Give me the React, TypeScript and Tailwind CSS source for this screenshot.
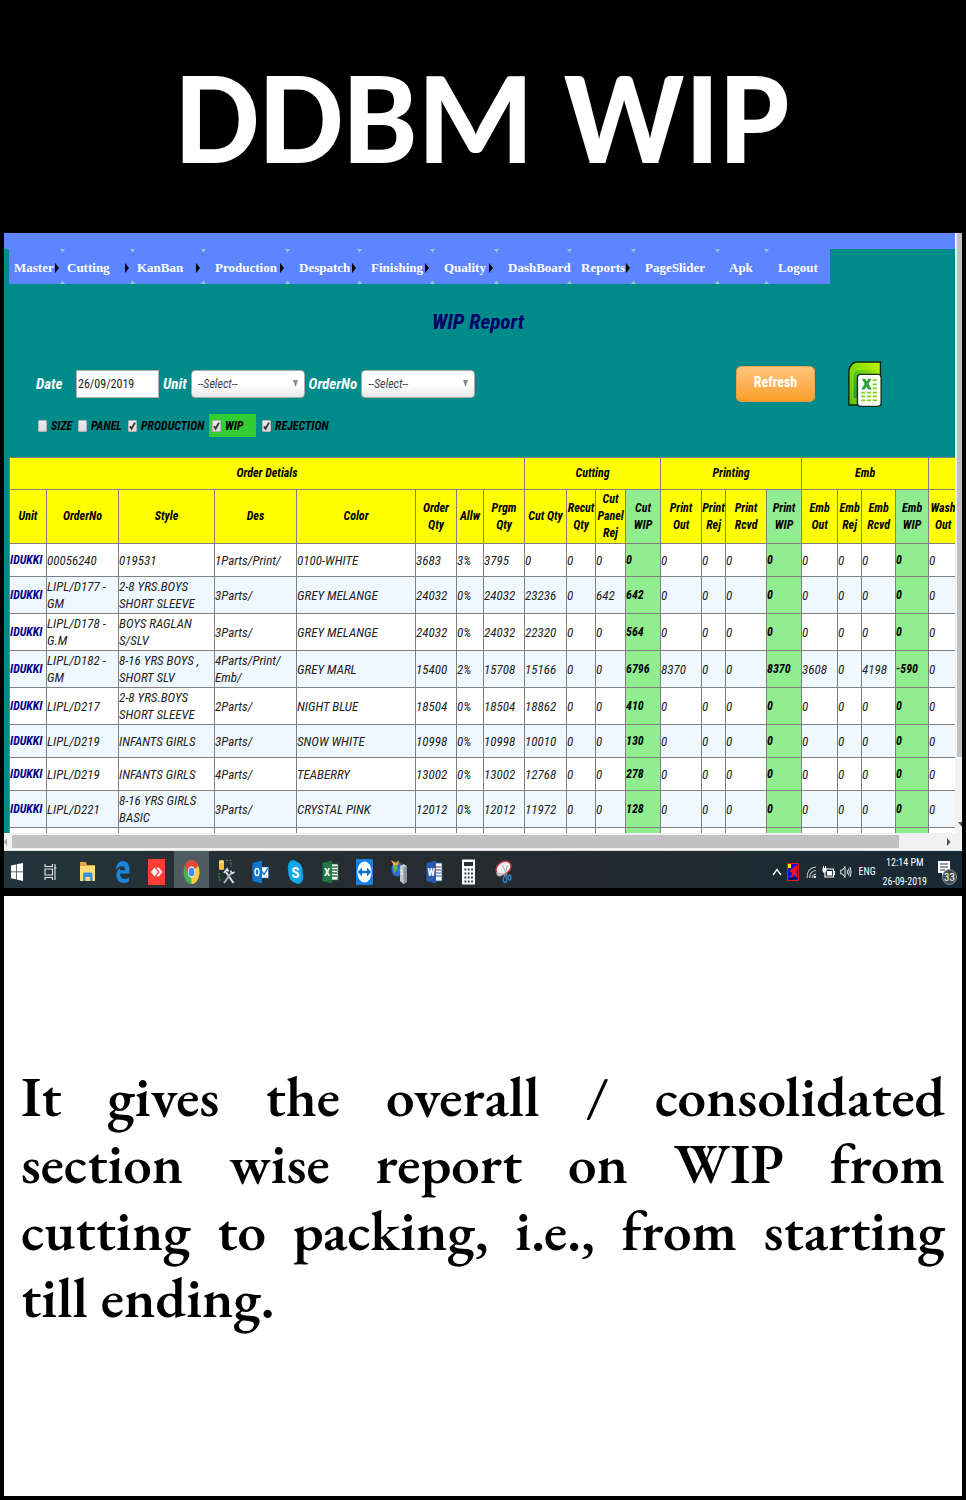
import type { ReactNode } from 'react';

type MenuEntry = { label: string; arrow?: boolean; box: string };

const menu: MenuEntry[] = [
  { label: 'Master', arrow: true, box: 'w-[53px] pl-[5px]' },
  { label: 'Cutting', arrow: true, box: 'w-[70px] pl-[5px]' },
  { label: 'KanBan', arrow: true, box: 'w-[71px] pl-[5px]' },
  { label: 'Production', arrow: true, box: 'w-[84px] pl-[12px]' },
  { label: 'Despatch', arrow: true, box: 'w-[72px] pl-[12px]' },
  { label: 'Finishing', arrow: true, box: 'w-[73px] pl-[12px]' },
  { label: 'Quality', arrow: true, box: 'w-[64px] pl-[12px]' },
  { label: 'DashBoard', box: 'w-[73px] pl-[12px]' },
  { label: 'Reports', arrow: true, box: 'w-[64px] pl-[12px]' },
  { label: 'PageSlider', box: 'w-[84px] pl-[12px]' },
  { label: 'Apk', box: 'w-[49px] pl-[12px]' },
  { label: 'Logout', box: 'w-[64px] pl-[12px]' },
];

const columnWidths = [
  'w-[37px]', 'w-[72px]', 'w-[96px]', 'w-[82px]', 'w-[119px]', 'w-[41px]', 'w-[27px]',
  'w-[41px]', 'w-[42px]', 'w-[29px]', 'w-[30px]', 'w-[35px]', 'w-[41px]', 'w-[24px]',
  'w-[41px]', 'w-[35px]', 'w-[36px]', 'w-[24px]', 'w-[34px]', 'w-[33px]', 'w-[29px]',
];

const columns = [
  'Unit', 'OrderNo', 'Style', 'Des', 'Color', 'Order Qty', 'Allw', 'Prgm Qty', 'Cut Qty',
  'Recut Qty', 'Cut Panel Rej', 'Cut WIP', 'Print Out', 'Print Rej', 'Print Rcvd',
  'Print WIP', 'Emb Out', 'Emb Rej', 'Emb Rcvd', 'Emb WIP', 'Wash Out',
];

const groups = [
  { label: 'Order Detials', span: 8 },
  { label: 'Cutting', span: 4 },
  { label: 'Printing', span: 4 },
  { label: 'Emb', span: 4 },
  { label: '', span: 1 },
];

const z = '0';
const rows: { tall: boolean; cells: string[] }[] = [
  { tall: false, cells: ['IDUKKI', '00056240', '019531', '1Parts/Print/', '0100-WHITE', '3683', '3%', '3795', z, z, z, z, z, z, z, z, z, z, z, z, z] },
  { tall: true, cells: ['IDUKKI', 'LIPL/D177 -\nGM', '2-8 YRS.BOYS\nSHORT SLEEVE', '3Parts/', 'GREY MELANGE', '24032', '0%', '24032', '23236', z, '642', '642', z, z, z, z, z, z, z, z, z] },
  { tall: true, cells: ['IDUKKI', 'LIPL/D178 -\nG.M', 'BOYS RAGLAN\nS/SLV', '3Parts/', 'GREY MELANGE', '24032', '0%', '24032', '22320', z, z, '564', z, z, z, z, z, z, z, z, z] },
  { tall: true, cells: ['IDUKKI', 'LIPL/D182 -\nGM', '8-16 YRS BOYS ,\nSHORT SLV', '4Parts/Print/\nEmb/', 'GREY MARL', '15400', '2%', '15708', '15166', z, z, '6796', '8370', z, z, '8370', '3608', z, '4198', '-590', z] },
  { tall: true, cells: ['IDUKKI', 'LIPL/D217', '2-8 YRS.BOYS\nSHORT SLEEVE', '2Parts/', 'NIGHT BLUE', '18504', '0%', '18504', '18862', z, z, '410', z, z, z, z, z, z, z, z, z] },
  { tall: false, cells: ['IDUKKI', 'LIPL/D219', 'INFANTS GIRLS', '3Parts/', 'SNOW WHITE', '10998', '0%', '10998', '10010', z, z, '130', z, z, z, z, z, z, z, z, z] },
  { tall: false, cells: ['IDUKKI', 'LIPL/D219', 'INFANTS GIRLS', '4Parts/', 'TEABERRY', '13002', '0%', '13002', '12768', z, z, '278', z, z, z, z, z, z, z, z, z] },
  { tall: true, cells: ['IDUKKI', 'LIPL/D221', '8-16 YRS GIRLS\nBASIC', '3Parts/', 'CRYSTAL PINK', '12012', '0%', '12012', '11972', z, z, '128', z, z, z, z, z, z, z, z, z] },
  { tall: true, cells: ['', 'LIPL/D221 -\nGM', '8-16 YRS GIRLS\nBASIC', '', '', '', '', '', '', '', '', '', '', '', '', '', '', '', '', '', ''] },
];

const isWip = (i: number) => i === 11 || i === 15 || i === 19;

function Menu() {
  return (
    <nav className="flex h-[35px] w-fit shrink-0 bg-[#5c85ff] font-['Liberation_Serif',serif] text-[13px] font-bold text-white">
      {menu.map((m) => (
        <a key={m.label} href="#" className={`group relative flex items-center justify-between pt-[2px] pr-[3px] whitespace-nowrap ${m.box}`}>
          {m.label}
          {m.arrow && (
            <svg width="4" height="10" viewBox="0 0 4 10" aria-hidden="true">
              <path d="M0 0 L4 5 L0 10 Z" fill="#000" />
            </svg>
          )}
          <svg className="absolute top-0 -right-[3px] z-10 group-last:hidden" width="5" height="35" viewBox="0 0 5 35" aria-hidden="true">
            <path d="M0 0 H5 L2.5 3.5 Z M0 35 H5 L2.5 31.5 Z" fill="#8fc9cf" />
          </svg>
        </a>
      ))}
    </nav>
  );
}

function Picker({ id, label }: { id: string; label: string }) {
  return (
    <div className="flex items-center gap-1">
      <label htmlFor={id} className="text-[15px] font-bold text-white italic">{label}</label>
      <div className="relative">
        <select id={id} className="h-[28px] w-[114px] appearance-none rounded-[4px] border border-[#aaaaaa] bg-linear-to-b from-white from-50% to-[#e9e9e9] pl-[6px] text-[12px] text-[#444444] italic">
          <option>--Select--</option>
        </select>
        <svg className="pointer-events-none absolute top-[10px] right-[7px]" width="5" height="7" viewBox="0 0 5 7" aria-hidden="true">
          <path d="M0 0 H5 L2.5 7 Z" fill="#888" />
        </svg>
      </div>
    </div>
  );
}

function Check({ label, checked, box = '' }: { label: string; checked?: boolean; box?: string }) {
  return (
    <label className={`flex h-[23px] items-center gap-1 ${box}`}>
      <span className="relative flex">
        <input type="checkbox" defaultChecked={checked} className="peer h-[12px] w-[9px] appearance-none rounded-[1px] border border-[#b5b5b5] bg-linear-to-b from-[#ededed] to-[#d8d8d8]" />
        <svg className="pointer-events-none absolute inset-0 hidden peer-checked:block" width="9" height="12" viewBox="0 0 9 12" aria-hidden="true">
          <path d="M2 6.3 L3.6 8.8 L7 2.6" fill="none" stroke="#333" strokeWidth="1.8" />
        </svg>
      </span>
      {label}
    </label>
  );
}

function ExcelExport() {
  return (
    <svg width="34" height="46" viewBox="0 0 98 134" aria-hidden="true">
      <defs>
        <linearGradient id="sheet" x1="1" y1="0" x2="0" y2="1">
          <stop offset="0" stopColor="#c6f500" />
          <stop offset="0.5" stopColor="#7fdc00" />
          <stop offset="1" stopColor="#5cc400" />
        </linearGradient>
        <linearGradient id="fold" x1="1" y1="0" x2="0" y2="1">
          <stop offset="0" stopColor="#a5ec00" />
          <stop offset="1" stopColor="#0f9a3c" />
        </linearGradient>
      </defs>
      <path d="M2 128 V28 Q6 6 24 3 H94 V128 Z" fill="url(#sheet)" stroke="#0b2414" strokeWidth="4" />
      <path d="M14 110 V40 Q16 26 30 25 H84 V110 Z" fill="url(#fold)" stroke="#a7ec1b" strokeWidth="2" />
      <rect x="27" y="39" width="69" height="93" rx="9" fill="#fff" stroke="#17301c" strokeWidth="4" />
      <path d="M40 52 H50 L54 60 L59 52 H68 L59 67 L69 83 H58 L53 75 L48 83 H38 L48 67 Z" fill="#2e9e36" />
      <path d="M71 56 H84 M71 68 H84 M71 80 H84 M38 92 H50 M55 92 H67 M71 92 H84 M38 103 H50 M55 103 H67 M71 103 H84 M38 115 H50 M55 115 H67 M71 115 H84" stroke="#7ed321" strokeWidth="5" />
    </svg>
  );
}

function ReportTable() {
  return (
    <div className="overflow-hidden">
      <table className="w-[948px] table-fixed border-collapse text-[13px] leading-[17px] text-[#222] italic">
        <colgroup>
          {columnWidths.map((w, i) => <col key={i} className={w} />)}
        </colgroup>
        <thead className="text-[12px] font-bold text-black">
          <tr className="h-[32px] bg-[#ffff00]">
            {groups.map((g, i) => (
              <th key={i} colSpan={g.span} className="border border-[#808080] p-0">{g.label}</th>
            ))}
          </tr>
          <tr className="h-[54px] bg-[#ffff00]">
            {columns.map((c, i) => (
              <th key={c} className={`border border-[#808080] p-0 ${isWip(i) ? 'bg-[#90ee90]' : ''}`}>{c}</th>
            ))}
          </tr>
        </thead>
        <tbody>
          {rows.map((r, n) => (
            <tr key={n} className={`${r.tall ? 'h-[37px]' : 'h-[33px]'} ${n % 2 ? 'bg-[#f0f8ff]' : 'bg-white'}`}>
              {r.cells.map((c, i) => (
                <td
                  key={i}
                  className={`border border-[#808080] p-0 whitespace-pre ${i === 0 ? 'text-[12px] font-bold text-[#00008b]' : isWip(i) ? 'bg-[#90ee90] text-[12px] font-bold text-black' : ''}`}
                >
                  {c}
                </td>
              ))}
            </tr>
          ))}
        </tbody>
      </table>
    </div>
  );
}

function Icon({ children }: { children: ReactNode }) {
  return <svg width="17" height="26" viewBox="0 0 17 26" aria-hidden="true">{children}</svg>;
}

const glyph = { fill: '#fff', fontFamily: 'Roboto Condensed, sans-serif', fontWeight: 700, textAnchor: 'middle' as const };

const apps: { name: string; icon: ReactNode }[] = [
  {
    name: 'File Explorer',
    icon: (
      <Icon>
        <path d="M1 3 H7 L8 6 H16 V22 H1 Z" fill="#e8a33d" />
        <path d="M1 7 H16 V22 H1 Z" fill="#ffdc78" />
        <path d="M4 22 V15 Q4 13.500 5.500 13.500 H12 Q13.500 13.500 13.500 15 V22 H11 V18 H6.500 V22 Z" fill="#3a93dd" />
      </Icon>
    ),
  },
  {
    name: 'Edge',
    icon: (
      <Icon>
        <path d="M1.500 11.500 Q2.500 2 9 2 Q15.500 2.500 15.500 11 V14.500 H6 Q6.500 20 10.500 20 Q13 20 15 18.500 V22.500 Q13 24 10 24 Q3 24 2.300 16.500 Q2.500 11.500 6.500 8.800 Q5.800 10 5.900 11.300 H11.300 Q11.300 7.300 8 7.300 Q4.500 7.300 1.500 11.500 Z" fill="#1a85dc" />
      </Icon>
    ),
  },
  {
    name: 'AnyDesk',
    icon: (
      <Icon>
        <rect width="17" height="26" fill="#ff3f34" />
        <path d="M6.500 8.500 L10 13 L6.500 17.500 L3 13 Z" fill="#fff" />
        <path d="M9 8.800 L12.500 13 L9 17.200 M10 8.500 L13.800 13 L10 17.500" fill="none" stroke="#fff" strokeWidth="1.100" />
      </Icon>
    ),
  },
  {
    name: 'Chrome',
    icon: (
      <Icon>
        <g transform="translate(8.500 13) scale(0.66 1)">
          <circle r="12" fill="#4caf50" />
          <path d="M0 0 L-10.400 -6 A12 12 0 0 1 10.400 -6 Z" fill="#e24a3b" />
          <path d="M0 0 L10.400 -6 A12 12 0 0 1 0 12 Z" fill="#ffcd40" />
          <path d="M-10.400 -6 L-5 3 L0 -5.500 H10.600 L10.400 -6 A12 12 0 0 0 -10.400 -6 Z" fill="#e24a3b" />
          <circle r="5.800" fill="#fff" />
          <circle r="4.600" fill="#4a8af4" />
        </g>
      </Icon>
    ),
  },
  {
    name: 'SQL Tools',
    icon: (
      <Icon>
        <rect x="1" y="1" width="5" height="10" rx="1.500" fill="#f0c23a" />
        <path d="M1.500 3 H5.500" stroke="#fff3b8" strokeWidth="1.500" />
        <path d="M8 1.500 H13 V8 M1 14 V21 H5" fill="none" stroke="#4f9a4a" strokeWidth="1" strokeDasharray="2 1.500" />
        <path d="M8 13 L15.500 24" stroke="#d8dde0" strokeWidth="2" />
        <path d="M14 13 L6 24" stroke="#9fb3c2" strokeWidth="2" />
        <path d="M6 14 L9 10 L10.500 12.500" fill="none" stroke="#dfe6ea" strokeWidth="1.800" />
        <path d="M12.500 11.500 L14 14.500 L16.500 13" fill="none" stroke="#dfe6ea" strokeWidth="1.500" />
      </Icon>
    ),
  },
  {
    name: 'Outlook',
    icon: (
      <Icon>
        <rect x="8" y="8" width="8.500" height="11" fill="#fff" stroke="#1277cf" strokeWidth="0.600" />
        <path d="M9.500 12 L12 15.500 L16 9" fill="none" stroke="#1277cf" strokeWidth="1.400" />
        <path d="M0.500 4 L10 1.500 V24.500 L0.500 22 Z" fill="#0f74cc" />
        <ellipse cx="5" cy="13" rx="2" ry="3.500" fill="none" stroke="#fff" strokeWidth="1.400" />
      </Icon>
    ),
  },
  {
    name: 'Skype',
    icon: (
      <Icon>
        <ellipse cx="6" cy="8" rx="5.300" ry="7" fill="#0f9ee0" />
        <ellipse cx="11" cy="18" rx="5.300" ry="7" fill="#0f9ee0" />
        <ellipse cx="8.500" cy="13" rx="7.300" ry="10.500" fill="#14a8ea" />
        <text x="8.500" y="18.500" fontSize="15" {...glyph}>S</text>
      </Icon>
    ),
  },
  {
    name: 'Excel',
    icon: (
      <Icon>
        <rect x="8" y="5" width="8" height="16" fill="#fff" stroke="#1e7145" strokeWidth="0.800" />
        <path d="M10 8 H15 M10 11 H15 M10 14 H15 M10 17 H15" stroke="#1e7145" strokeWidth="1.300" />
        <path d="M0.500 4 L10 1.500 V24.500 L0.500 22 Z" fill="#1c7a45" />
        <text x="5.200" y="17" fontSize="11" {...glyph}>X</text>
      </Icon>
    ),
  },
  {
    name: 'TeamViewer',
    icon: (
      <Icon>
        <rect width="17" height="26" rx="1" fill="#1680e0" />
        <ellipse cx="8.500" cy="13" rx="7.200" ry="10.500" fill="#fff" />
        <path d="M1.800 13 L6 8.500 V11.700 H11 V8.500 L15.200 13 L11 17.500 V14.300 H6 V17.500 Z" fill="#1272d2" />
      </Icon>
    ),
  },
  {
    name: 'Server Manager',
    icon: (
      <Icon>
        <ellipse cx="6" cy="10" rx="5.500" ry="7.500" fill="#2f6bd0" />
        <path d="M2 7 Q5 4 7 9 Q5 13 3 14 Z M8 11 L11 9 L10 15 Z" fill="#58b947" />
        <path d="M0 1 L5 4 L8 1 L7 6 L3 7 Z" fill="#f5a623" />
        <path d="M9 7 L12.500 5 L16 7 V23 L12.500 25 L9 22 Z" fill="#c3c8cb" />
        <path d="M12.500 9 L16 7 V23 L12.500 25 Z" fill="#8e969b" />
        <path d="M9.800 11 L12 12.500 M9.800 14 L12 15.500" stroke="#fff" strokeWidth="1" />
      </Icon>
    ),
  },
  {
    name: 'Word',
    icon: (
      <Icon>
        <rect x="8" y="4" width="8" height="18" fill="#fff" stroke="#2b579a" strokeWidth="0.800" />
        <path d="M10 8 H15 M10 11 H15 M10 14 H15 M10 17 H15" stroke="#2b579a" strokeWidth="1" />
        <path d="M0.500 4 L10 1.500 V24.500 L0.500 22 Z" fill="#2b5bb0" />
        <text x="5.200" y="16.500" fontSize="10" {...glyph}>W</text>
      </Icon>
    ),
  },
  {
    name: 'Calculator',
    icon: (
      <Icon>
        <rect x="2" y="0.500" width="13" height="25" fill="#fff" />
        <rect x="4" y="3" width="9" height="4" fill="#26323a" />
        <path d="M4.500 10.500 H13 M4.500 14.500 H13 M4.500 18.500 H13 M4.500 22.500 H13" stroke="#26323a" strokeWidth="1.800" strokeDasharray="1.800 1.500" />
      </Icon>
    ),
  },
  {
    name: 'Snipping Tool',
    icon: (
      <Icon>
        <ellipse cx="8.500" cy="9" rx="8" ry="6" transform="rotate(-35 8.500 9)" fill="#f3f3f3" stroke="#c9373a" strokeWidth="1.400" />
        <path d="M1.500 13 Q1 17 5 17.500 L10 15" fill="#b9bfc4" />
        <path d="M7.500 6 L12 17 M12.500 6 L9.500 17" stroke="#a5adb2" strokeWidth="1" />
        <ellipse cx="10" cy="20.500" rx="1.700" ry="3" fill="none" stroke="#2a8ad4" strokeWidth="1.300" />
        <ellipse cx="14.500" cy="18.500" rx="1.500" ry="2.500" fill="none" stroke="#2a8ad4" strokeWidth="1.300" />
      </Icon>
    ),
  },
];

function Taskbar() {
  return (
    <div className="flex h-[37px] items-stretch bg-linear-to-r from-[#24343c] via-[#262b2e] to-[#182a36] font-['Roboto_Condensed',sans-serif] text-white">
      <button type="button" aria-label="Start" className="flex w-[26px] items-center justify-center pt-[4px]">
        <svg width="12" height="18" viewBox="0 0 12 18" aria-hidden="true">
          <path d="M0 2.500 L5 1.500 V8.500 H0 Z M5.700 1.300 L12 0 V8.500 H5.700 Z M0 9.300 H5 V16.300 L0 15.300 Z M5.700 9.300 H12 V18 L5.700 16.500 Z" fill="#fff" />
        </svg>
      </button>
      <button type="button" aria-label="Task View" className="flex w-[40px] items-center justify-center pt-[4px]">
        <svg width="13" height="18" viewBox="0 0 13 18" aria-hidden="true">
          <path d="M1 1 V3.500 H8.500 V1 M1 17 V14.500 H8.500 V17 M1 6 H8.500 V12 H1 Z M11 1 V17 M10 5 H12.500" fill="none" stroke="#e6e9ea" strokeWidth="1.100" />
        </svg>
      </button>
      <div className="grid w-[451px] grid-cols-13">
        {apps.map((a) => (
          <button key={a.name} type="button" aria-label={a.name} className={`flex items-center justify-center pt-[4px] ${a.name === 'Chrome' ? 'bg-[#4f5b63]' : ''}`}>
            {a.icon}
          </button>
        ))}
      </div>
      <div className="ml-auto flex items-center gap-[5px] pt-[4px] pr-[5px] text-[10px] leading-[19px]">
        <svg width="10" height="8" viewBox="0 0 10 8" aria-hidden="true"><path d="M1 7 L5 1.500 L9 7" fill="none" stroke="#fff" strokeWidth="1.300" /></svg>
        <svg width="12" height="18" viewBox="0 0 12 18" aria-hidden="true">
          <rect x="0.500" y="0.500" width="11" height="17" fill="#1413d6" stroke="#e01a1a" />
          <path d="M1 1 H4 V5 H1 Z" fill="#ffe600" />
          <path d="M8 4 L10 3 L9 9 L10 14 L7 11 L4 15 L6 9 L3 8 Z" fill="#e81c1c" stroke="#e81c1c" />
          <path d="M2 16 L9 15" stroke="#111" strokeWidth="2" />
        </svg>
        <svg className="ml-[1px]" width="12" height="14" viewBox="0 0 12 14" aria-hidden="true">
          <path d="M2 13 Q2 3 11 2 M4.500 13 Q5 6 11 5.500 M7 13 Q7.500 9.500 11 9" fill="none" stroke="#c4cacd" strokeWidth="1.100" />
          <circle cx="9.800" cy="12" r="1.200" fill="#fff" />
        </svg>
        <svg width="13" height="12" viewBox="0 0 13 12" aria-hidden="true">
          <path d="M4 3 H11.500 V11 H3 V7 M12.500 5 V9" fill="none" stroke="#fff" strokeWidth="1.200" />
          <path d="M5 5 H10 V9.500 H5 Z M0.500 2 H4.500 V5 Q4 7 2.500 7 Q1 7 0.500 5 Z M1 0 H2 V2 H1 Z M3 0 H4 V2 H3 Z" fill="#fff" />
        </svg>
        <svg width="12" height="14" viewBox="0 0 12 14" aria-hidden="true">
          <path d="M0.800 5 H2.500 L5 1.500 V12.500 L2.500 9 H0.800 Z M7 5 Q8 7 7 9 M8.500 3.500 Q10.200 7 8.500 10.500 M10 2 Q12.500 7 10 12" fill="none" stroke="#e6e9ea" strokeWidth="1" />
        </svg>
        <span className="pl-[1px]">ENG</span>
        <div className="pl-[2px] text-center">
          <div>12:14 PM</div>
          <div>26-09-2019</div>
        </div>
        <svg className="ml-[5px]" width="20" height="26" viewBox="0 0 20 26" aria-hidden="true">
          <path d="M1 2 H13 V14 H7 L5 17 V14 H1 Z" fill="#fff" />
          <path d="M3 5 H11 M3 8 H11 M3 11 H8" stroke="#24343c" strokeWidth="1.200" />
          <ellipse cx="12.500" cy="18" rx="7" ry="7.500" fill="#454d52" stroke="#8a9094" strokeWidth="1" />
          <text x="12.500" y="22" fontSize="11" fill="#fff" fontFamily="Roboto Condensed, sans-serif" textAnchor="middle">33</text>
        </svg>
      </div>
    </div>
  );
}

function Screen() {
  return (
    <section className="font-['Roboto_Condensed',sans-serif]">
      <div className="flex h-[600px] overflow-hidden">
        <div className="min-w-0 flex-1 overflow-hidden bg-[#008b8b]">
          <div className="h-[16px] bg-[#5c85ff]" />
          <div className="pl-[5px]">
            <Menu />
            <h2 className="pt-[22px] pr-[8px] text-center text-[21px] leading-[32px] font-bold text-[#000066] italic">WIP Report</h2>
            <form className="px-[27px] pt-[23px]">
              <div className="flex h-[46px] items-center gap-1">
                <label htmlFor="date" className="w-[36px] text-[15px] font-bold text-white italic">Date</label>
                <input id="date" type="text" defaultValue="26/09/2019" className="h-[28px] w-[83px] border border-[#b0b0b0] bg-white px-[1px] text-[12px] text-[#222]" />
                <Picker id="unit" label="Unit" />
                <Picker id="order" label="OrderNo" />
                <button type="button" className="mr-[29px] ml-auto h-[36px] w-[79px] rounded-[5px] border border-[#e8a04a] bg-linear-to-b from-[#ffc57a] to-[#fb9d23] pb-[3px] text-[14px] font-bold text-white">Refresh</button>
                <button type="button" aria-label="Export to Excel" className="mr-[46px]"><ExcelExport /></button>
              </div>
              <div className="flex pt-[7px] pb-[20px] text-[12px] font-bold text-black italic">
                <Check label="SIZE" box="w-[40px] pl-[2px]" />
                <Check label="PANEL" box="w-[50px] pl-[2px]" />
                <Check label="PRODUCTION" checked box="w-[83px] pl-[2px]" />
                <Check label="WIP" checked box="w-[47px] bg-[#32cd32] pl-[3px]" />
                <Check label="REJECTION" checked box="pl-[6px]" />
              </div>
            </form>
            <ReportTable />
          </div>
        </div>
        <div className="flex w-[7px] flex-col bg-[#f1f1f1] pl-[2px]">
          <div className="h-[524px] bg-[#c1c1c1]" />
          <svg className="mt-auto mb-[6px]" width="5" height="5" viewBox="0 0 5 5" aria-hidden="true"><path d="M1 0 H5 V5 Z" fill="#505050" /></svg>
        </div>
      </div>
      <div className="flex h-[18px] items-center justify-between border-b border-[#dfe3e3] bg-[#f1f1f1]">
        <svg width="5" height="8" viewBox="0 0 5 8" aria-hidden="true"><path d="M3 0 V8 L0 4 Z" fill="#a3a3a3" /></svg>
        <div className="mr-[48px] ml-[3px] h-[13px] flex-1 bg-[#c1c1c1]" />
        <svg className="mr-[11px]" width="4" height="8" viewBox="0 0 4 8" aria-hidden="true"><path d="M0 0 V8 L3.500 4 Z" fill="#505050" /></svg>
      </div>
      <Taskbar />
    </section>
  );
}

export default function App() {
  return (
    <main className="min-h-screen bg-black p-1">
      <h1 className="flex h-[229px] items-center justify-center pb-[3px] font-['Carlito',sans-serif] text-[133px] leading-none font-bold text-white">DDBM WIP</h1>
      <Screen />
      <section className="mt-2 min-h-[600px] bg-white px-[17px] pt-[167px]">
        <p className="font-['EB_Garamond',serif] text-[57px] leading-[67px] font-semibold text-black">
          <span className="block [text-align-last:justify]">It gives the overall / consolidated </span>
          <span className="block [text-align-last:justify]">section wise report on WIP from </span>
          <span className="block [text-align-last:justify]">cutting to packing, i.e., from starting </span>
          <span className="block">till ending.</span>
        </p>
      </section>
    </main>
  );
}
